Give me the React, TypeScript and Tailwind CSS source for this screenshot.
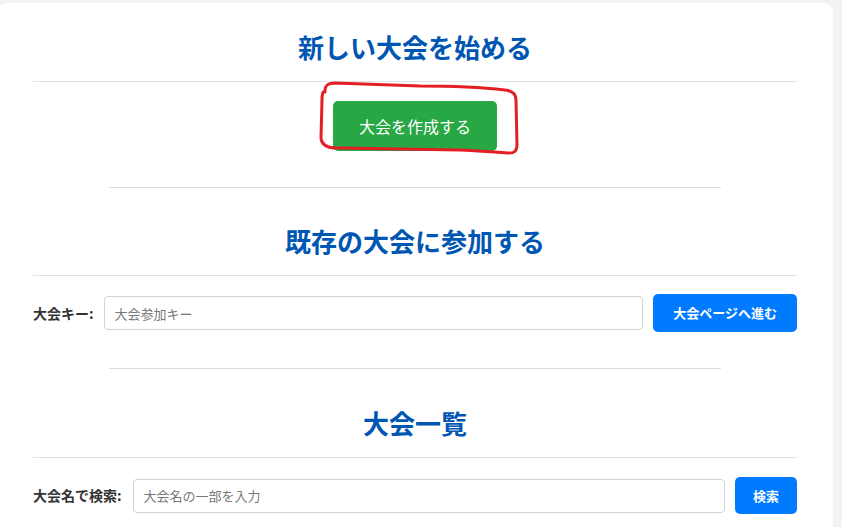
import React from "react";

const font = { fontFamily: '"Noto Sans CJK JP", "Noto Sans", sans-serif' };

function Heading({ children, mt }: { children: React.ReactNode; mt: string }) {
  return (
    <h2
      className={`${mt} border-b border-[#dee2e6] pb-[19px] text-center text-[26px] font-bold leading-[30px] text-[#0056b3]`}
    >
      {children}
    </h2>
  );
}

export default function App() {
  return (
    <div className="min-h-[527px] w-[842px] overflow-hidden bg-[#f1f3f5] pt-[3px]" style={font}>
      <div className="ml-[-3px] w-[836px] rounded-[10px] bg-white px-[36px] pb-[40px] pt-[29px]">
        <Heading mt="mt-0">新しい大会を始める</Heading>
        <div className="mt-[19px] flex justify-center">
          <div className="relative">
            <button className="h-[50px] rounded-[5px] bg-[#28a745] px-[26px] text-[16px] text-white">
              大会を作成する
            </button>
            <svg
              className="pointer-events-none absolute left-[-15px] top-[-21px]"
              width="204"
              height="80"
              viewBox="0 0 204 80"
              fill="none"
            >
              <path
                d="M 7 12 Q 6 3 17 3 L 102 6 Q 152 6 187 10 Q 198 11 198 20 L 199 65 Q 199 74 190 73 Q 162 71 142 70 L 22 68 Q 4 69 3 58 L 4 20 Q 4 10 7 12"
                stroke="#e31e24"
                strokeWidth="3"
                strokeLinecap="round"
                strokeLinejoin="round"
              />
            </svg>
          </div>
        </div>
        <hr className="mx-auto mt-[36px] w-[612px] border-t border-[#dddddd]" />

        <Heading mt="mt-[38px]">既存の大会に参加する</Heading>
        <div className="mt-[18px] flex items-center">
          <label className="mr-[10px] text-[14px] font-bold text-[#333]">大会キー:</label>
          <input
            className="h-[34px] flex-1 rounded-[4px] border border-[#ced4da] px-[10px] text-[13px] outline-none placeholder:text-[#777]"
            placeholder="大会参加キー"
          />
          <button className="ml-[10px] h-[38px] rounded-[5px] bg-[#007bff] px-[20px] text-[13px] font-bold text-white">
            大会ページへ進む
          </button>
        </div>
        <hr className="mx-auto mt-[36px] w-[612px] border-t border-[#dddddd]" />

        <Heading mt="mt-[39px]">大会一覧</Heading>
        <div className="mt-[19px] flex items-center">
          <label className="mr-[11px] text-[14px] font-bold text-[#333]">大会名で検索:</label>
          <input
            className="h-[34px] flex-1 rounded-[4px] border border-[#ced4da] px-[10px] text-[13px] outline-none placeholder:text-[#777]"
            placeholder="大会名の一部を入力"
          />
          <button className="ml-[10px] h-[37px] rounded-[5px] bg-[#007bff] px-[18px] text-[13px] font-bold text-white">
            検索
          </button>
        </div>
      </div>
    </div>
  );
}
